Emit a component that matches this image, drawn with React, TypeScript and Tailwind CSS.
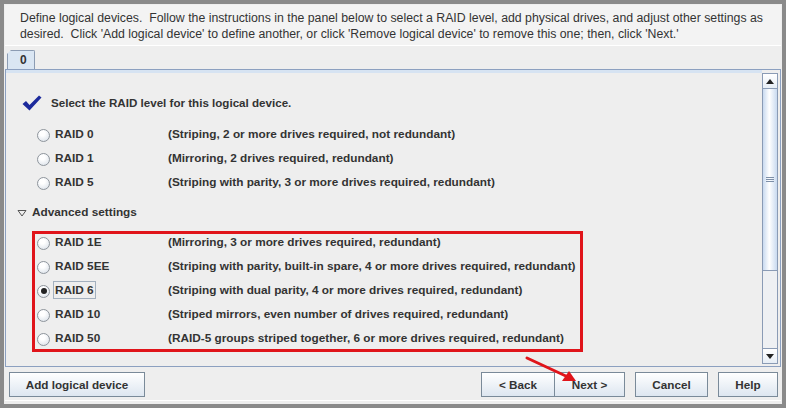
import React from 'react';

const basic = [
  { id: 'RAID 0', desc: '(Striping, 2 or more drives required, not redundant)' },
  { id: 'RAID 1', desc: '(Mirroring, 2 drives required, redundant)' },
  { id: 'RAID 5', desc: '(Striping with parity, 3 or more drives required, redundant)' },
];

const advanced = [
  { id: 'RAID 1E', desc: '(Mirroring, 3 or more drives required, redundant)' },
  { id: 'RAID 5EE', desc: '(Striping with parity, built-in spare, 4 or more drives required, redundant)' },
  { id: 'RAID 6', desc: '(Striping with dual parity, 4 or more drives required, redundant)', checked: true },
  { id: 'RAID 10', desc: '(Striped mirrors, even number of drives required, redundant)' },
  { id: 'RAID 50', desc: '(RAID-5 groups striped together, 6 or more drives required, redundant)' },
];

function Radio({ checked }: { checked?: boolean }) {
  return (
    <span className="w-[13px] h-[13px] rounded-full border border-[#8e959c] bg-[radial-gradient(circle_at_40%_30%,#ffffff_25%,#e3e8ee_75%,#c8d0da)] flex items-center justify-center shrink-0">
      {checked && <span className="w-[6px] h-[6px] rounded-full bg-[#222]" />}
    </span>
  );
}

function Row({ id, desc, checked }: { id: string; desc: string; checked?: boolean }) {
  return (
    <div className="h-[24px] flex items-center pl-[31px]">
      <Radio checked={checked} />
      <div className="w-[118px] pl-[3px]">
        <span className={`px-[1px] py-[1px] ${checked ? 'border border-[#a3b0be]' : 'border border-transparent'}`}>{id}</span>
      </div>
      <span>{desc}</span>
    </div>
  );
}

function Btn({ children, className = '' }: { children: React.ReactNode; className?: string }) {
  return (
    <div
      className={`h-[25px] flex items-center justify-center border border-[#7a8a99] bg-[linear-gradient(#ffffff,#dde6f0)] text-[11.7px] font-bold text-[#333] ${className}`}
    >
      {children}
    </div>
  );
}

export default function App() {
  return (
    <div
      className="w-[786px] h-[408px] border-4 border-[#8a8a8a] bg-[#eeeeee] flex flex-col relative overflow-hidden text-[#333]"
      style={{ fontFamily: '"Liberation Sans", Arial, sans-serif' }}
    >
      {/* instructions */}
      <div className="mx-[1px] mt-[1px] h-[41px] bg-[#f3f3f3] border-b border-white px-[15px] pt-[5px] text-[12.3px] leading-[16px]">
        <p>Define logical devices.&nbsp; Follow the instructions in the panel below to select a RAID level, add physical drives, and adjust other settings as</p>
        <p>desired.&nbsp; Click 'Add logical device' to define another, or click 'Remove logical device' to remove this one; then, click 'Next.'</p>
      </div>

      {/* tab */}
      <div className="pl-[3px] mt-[4px] h-[19px] flex items-end">
        <div className="w-[28px] h-[19px] bg-[#dae6f3] border border-b-0 border-[#8c9cb3] [clip-path:polygon(4px_0,100%_0,100%_100%,0_100%,0_4px)] rounded-tr-[2px] flex items-center pl-[12px] text-[12px] font-bold">
          0
        </div>
      </div>

      {/* panel */}
      <div className="mx-[1px] h-[298px] border border-[#8ca0c0] flex">
        <div className="flex-1 border-t-[3px] border-[#d6e3f2] text-[11.8px] font-bold">
          <div className="pt-[18px] pl-[16px] h-[40px] flex items-end">
            <div className="h-[20px] flex items-center">
              <svg width="20" height="16" viewBox="0 0 20 16" className="mr-[9px]">
                <path d="M0.5 9 L4 6 L7.5 10 L17 0.5 L19.5 2.5 L7.5 15.5 Z" fill="#1c2a9c" />
              </svg>
              <span className="text-[11.6px]">Select the RAID level for this logical device.</span>
            </div>
          </div>
          <div className="mt-[10px]">
            {basic.map((r) => (
              <Row key={r.id} {...r} />
            ))}
          </div>
          <div className="mt-[8px] h-[20px] flex items-center pl-[11px]">
            <svg width="10" height="8" viewBox="0 0 10 8" className="mr-[5px]">
              <path d="M1 1.5 L9 1.5 L5 7 Z" fill="none" stroke="#555" strokeWidth="1" />
            </svg>
            <span>Advanced settings</span>
          </div>
          <div className="mt-[8px] relative">
            {advanced.map((r) => (
              <Row key={r.id} {...r} />
            ))}
            <div className="absolute left-[26px] top-[0px] w-[551px] h-[121px] border-[3px] border-[#e0141a]" />
          </div>
        </div>

        {/* scrollbar */}
        <div className="w-[16px] mr-[2px] mt-[3px] mb-[2px] border border-[#8a9bb5] flex flex-col bg-[#eef0f3]">
          <div className="h-[15px] border-b border-[#8a9bb5] bg-[linear-gradient(#ffffff,#e6edf5)] flex items-center justify-center">
            <svg width="8" height="5" viewBox="0 0 8 5"><path d="M0 5 L4 0 L8 5 Z" fill="#222" /></svg>
          </div>
          <div className="h-[182px] border-b border-[#8a9bb5] bg-[linear-gradient(90deg,#c9daf0,#ffffff_45%,#c9daf0)] flex items-center justify-center">
            <div className="flex flex-col gap-[1px]">
              <div className="w-[8px] h-[1px] bg-[#7d8fa8]" />
              <div className="w-[8px] h-[1px] bg-[#7d8fa8]" />
              <div className="w-[8px] h-[1px] bg-[#7d8fa8]" />
            </div>
          </div>
          <div className="flex-1" />
          <div className="h-[15px] border-t border-[#8a9bb5] bg-[linear-gradient(#ffffff,#e6edf5)] flex items-center justify-center">
            <svg width="8" height="5" viewBox="0 0 8 5"><path d="M0 0 L8 0 L4 5 Z" fill="#222" /></svg>
          </div>
        </div>
      </div>

      {/* buttons */}
      <div className="mt-[5px] h-[25px] flex pl-[5px] pr-[4px]">
        <Btn className="w-[136px]">Add logical device</Btn>
        <div className="flex-1" />
        <Btn className="w-[74px]">&lt; Back</Btn>
        <Btn className="w-[70px] border-l-0">Next &gt;</Btn>
        <Btn className="w-[73px] ml-[10px]">Cancel</Btn>
        <Btn className="w-[60px] ml-[10px]">Help</Btn>
      </div>
      <div className="mt-[3px] h-[1px] bg-white mx-[1px]" />

      {/* annotation arrow */}
      <svg className="absolute left-[520px] top-[350px]" width="60" height="32" viewBox="0 0 60 32">
        <path d="M3 4 L44 23" stroke="#e0141a" strokeWidth="3" strokeLinecap="round" />
        <path d="M52 27 L38 27 L45 17 Z" fill="#e0141a" />
      </svg>
    </div>
  );
}
